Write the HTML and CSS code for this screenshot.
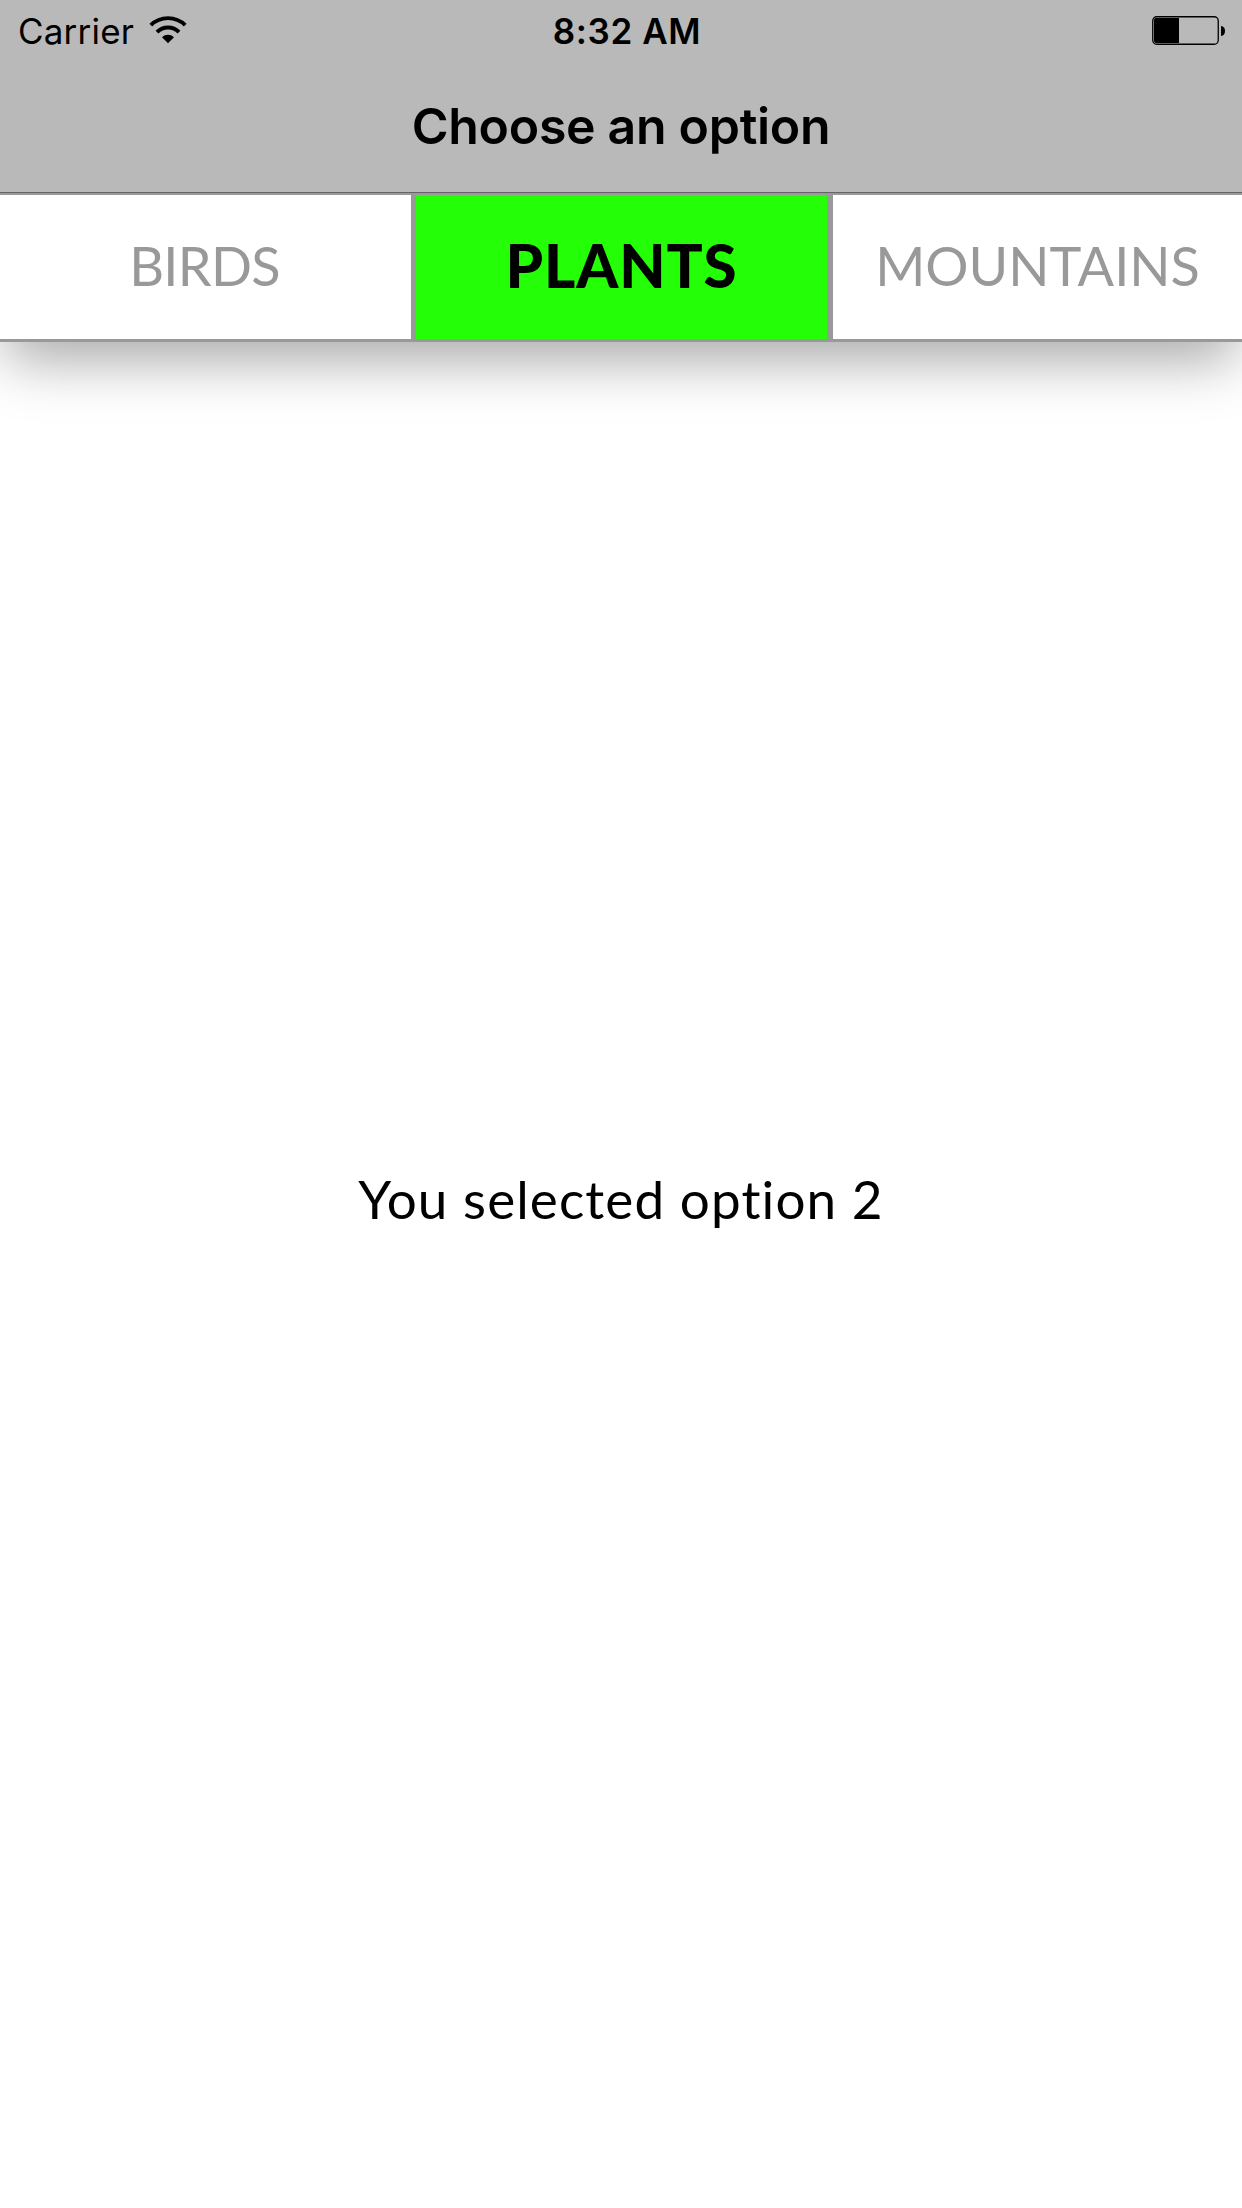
FILE: index.html
```
<!DOCTYPE html>
<html lang="en">
<head>
<meta charset="utf-8">
<title>Choose an option</title>
<link rel="stylesheet" href="styles.css">
</head>
<body>
<div class="screen">
  <header class="top">
    <div class="status">
      <div class="status-left">
        <span class="carrier">Carrier</span>
        <svg class="wifi" width="38" height="28" viewBox="0 0 38 28">
          <path d="M1.8 9.2A24.5 24.5 0 0 1 36.2 9.2" fill="none" stroke="#000" stroke-width="3.8"/>
          <path d="M8 16.2A15.5 15.5 0 0 1 30 16.2" fill="none" stroke="#000" stroke-width="4"/>
          <path d="M13 21.3A8.6 8.6 0 0 1 25 21.3L19 27.3Z"/>
        </svg>
      </div>
      <span class="time">8:32 AM</span>
      <svg class="battery" width="74" height="30" viewBox="0 0 74 30">
        <rect x=".75" y=".75" width="65.5" height="27.5" rx="4" fill="none" stroke="#000" stroke-width="1.3"/>
        <path d="M4 2H27V27H4Q2 27 2 25V4Q2 2 4 2Z"/>
        <path d="M69 10Q73 10.5 73 15T69 20Z"/>
      </svg>
    </div>
    <h1 class="title">Choose an option</h1>
  </header>
  <nav class="tabs">
    <a class="tab birds">BIRDS</a>
    <a class="tab plants">PLANTS</a>
    <a class="tab mountains">MOUNTAINS</a>
  </nav>
  <main class="content"><p class="message">You selected option 2</p></main>
</div>
</body>
</html>
```
FILE: styles.css
```
* { box-sizing: border-box; margin: 0; }
body { background: #fff; color: #000; }
.screen { display: flex; flex-direction: column; width: 1242px; height: 2208px; overflow: hidden; }
.top { position: relative; z-index: 1; height: 193px; background: #b9b9b9; border-bottom: 1px solid #656565; font-family: Inter, "Liberation Sans", sans-serif; }
.status { display: grid; grid-template-columns: 1fr auto 1fr; align-items: center; height: 62px; padding: 0 16px 0 18px; }
.status-left { display: flex; align-items: center; gap: 15px; }
.carrier { font-size: 35px; line-height: 62px; letter-spacing: .2px; }
.wifi { display: block; margin-top: -2px; }
.time { padding-left: 10px; font-size: 35px; line-height: 62px; font-weight: 600; letter-spacing: .6px; }
.battery { justify-self: end; }
.title { font-size: 50px; font-weight: 600; line-height: 128px; letter-spacing: -.3px; text-align: center; }
.tabs { display: grid; grid-template-columns: 416px 411px 415px; height: 149px; border-top: 2px solid #999; border-bottom: 3px solid #999; box-shadow: 0 24px 56px -6px rgba(0, 0, 0, .34); font-family: Lato, "Liberation Sans", sans-serif; }
.tab { display: flex; align-items: center; justify-content: center; padding-bottom: 3px; background: #fff; color: #999; font-size: 54px; line-height: 1; }
.birds { padding-right: 2px; border-right: 5px solid #999; letter-spacing: -.7px; }
.plants { padding-bottom: 5px; background: #24ff08; color: #000; font-size: 60px; font-weight: 900; letter-spacing: .9px; }
.mountains { padding-left: 6px; background: linear-gradient(90deg, #999 2px, #58c950 2px 3px, #999 3px 6px, #fff 6px); }
.content { flex: 1; display: flex; align-items: center; justify-content: center; padding-bottom: 153px; font-family: Lato, "Liberation Sans", sans-serif; }
.message { font-size: 53px; line-height: 64px; letter-spacing: 1.1px; font-variant-ligatures: none; }
```
